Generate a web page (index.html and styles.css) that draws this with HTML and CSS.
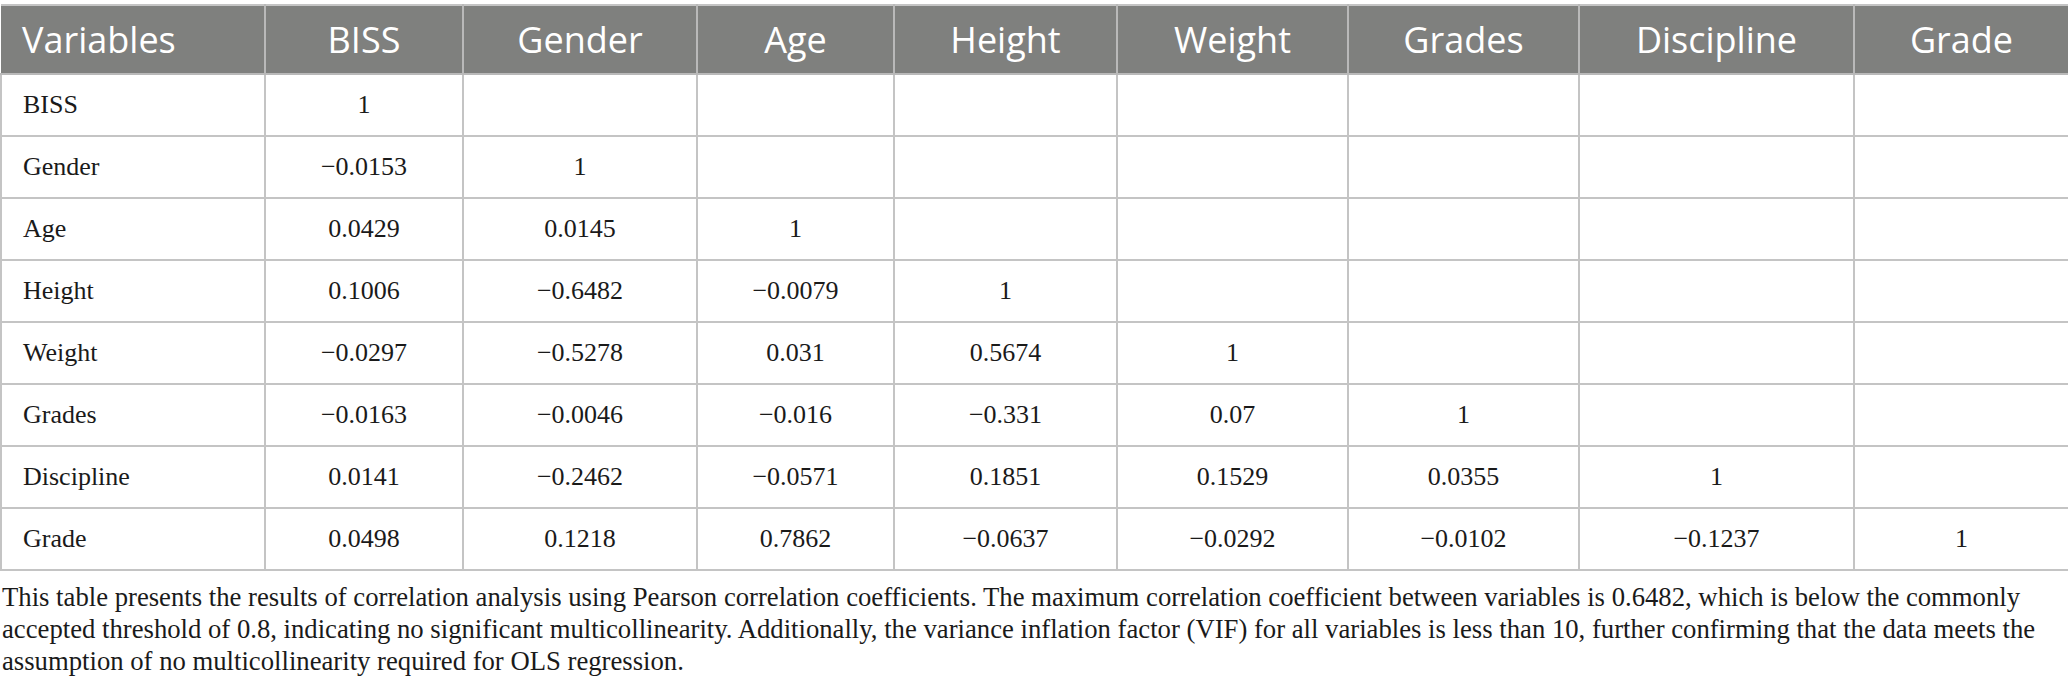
FILE: index.html
```html
<!DOCTYPE html>
<html>
<head>
<meta charset="utf-8">
<link rel="stylesheet" href="styles.css">
</head>
<body>
<div class="page">
<table class="corr">
  <colgroup>
    <col class="c1"><col class="c2"><col class="c3"><col class="c4"><col class="c5"><col class="c6"><col class="c7"><col class="c8"><col class="c9">
  </colgroup>
  <thead>
    <tr><th class="first">Variables</th><th>BISS</th><th>Gender</th><th>Age</th><th>Height</th><th>Weight</th><th>Grades</th><th>Discipline</th><th>Grade</th></tr>
  </thead>
  <tbody>
    <tr><td class="first">BISS</td><td>1</td><td></td><td></td><td></td><td></td><td></td><td></td><td></td></tr>
    <tr><td class="first">Gender</td><td>−0.0153</td><td>1</td><td></td><td></td><td></td><td></td><td></td><td></td></tr>
    <tr><td class="first">Age</td><td>0.0429</td><td>0.0145</td><td>1</td><td></td><td></td><td></td><td></td><td></td></tr>
    <tr><td class="first">Height</td><td>0.1006</td><td>−0.6482</td><td>−0.0079</td><td>1</td><td></td><td></td><td></td><td></td></tr>
    <tr><td class="first">Weight</td><td>−0.0297</td><td>−0.5278</td><td>0.031</td><td>0.5674</td><td>1</td><td></td><td></td><td></td></tr>
    <tr><td class="first">Grades</td><td>−0.0163</td><td>−0.0046</td><td>−0.016</td><td>−0.331</td><td>0.07</td><td>1</td><td></td><td></td></tr>
    <tr><td class="first">Discipline</td><td>0.0141</td><td>−0.2462</td><td>−0.0571</td><td>0.1851</td><td>0.1529</td><td>0.0355</td><td>1</td><td></td></tr>
    <tr><td class="first">Grade</td><td>0.0498</td><td>0.1218</td><td>0.7862</td><td>−0.0637</td><td>−0.0292</td><td>−0.0102</td><td>−0.1237</td><td>1</td></tr>
  </tbody>
</table>
<p class="note">This table presents the results of correlation analysis using Pearson correlation coefficients. The maximum correlation coefficient between variables is 0.6482, which is below the commonly accepted threshold of 0.8, indicating no significant multicollinearity. Additionally, the variance inflation factor (VIF) for all variables is less than 10, further confirming that the data meets the assumption of no multicollinearity required for OLS regression.</p>
</div>
</body>
</html>
```
FILE: styles.css
```css
html, body {
  margin: 0;
  padding: 0;
  background: #ffffff;
}
.page {
  width: 2068px;
  padding-top: 4px;
}
.corr {
  border-collapse: collapse;
  table-layout: fixed;
  width: 2068px;
}
.c1 { width: 264px; }
.c2 { width: 198px; }
.c3 { width: 234px; }
.c4 { width: 197px; }
.c5 { width: 223px; }
.c6 { width: 231px; }
.c7 { width: 231px; }
.c8 { width: 275px; }
.c9 { width: 215px; }
.corr th {
  background: #7f807e;
  color: #ffffff;
  font-family: "Open Sans", "Noto Sans", sans-serif;
  font-weight: 400;
  font-size: 36px;
  height: 67px;
  padding: 0;
  text-align: center;
  border: 2px solid #b9b9b9;
  border-top: 2px solid #c4c4c4;
  line-height: 1;
}
.corr td {
  font-family: "Liberation Serif", serif;
  font-size: 26px;
  color: #1a1a1a;
  height: 60px;
  padding: 0;
  text-align: center;
  border: 2px solid #c4c4c4;
  line-height: 1;
}
.corr th.first, .corr td.first {
  text-align: left;
  padding-left: 21px;
}
.corr th.first {
  border-left: none;
}
.corr td.first {
  border-left: 2px solid #c4c4c4;
}
.note {
  margin: 0;
  padding: 10px 0 0 2px;
  font-family: "Liberation Serif", serif;
  font-size: 26.7px;
  line-height: 32px;
  color: #1a1a1a;
}
```
